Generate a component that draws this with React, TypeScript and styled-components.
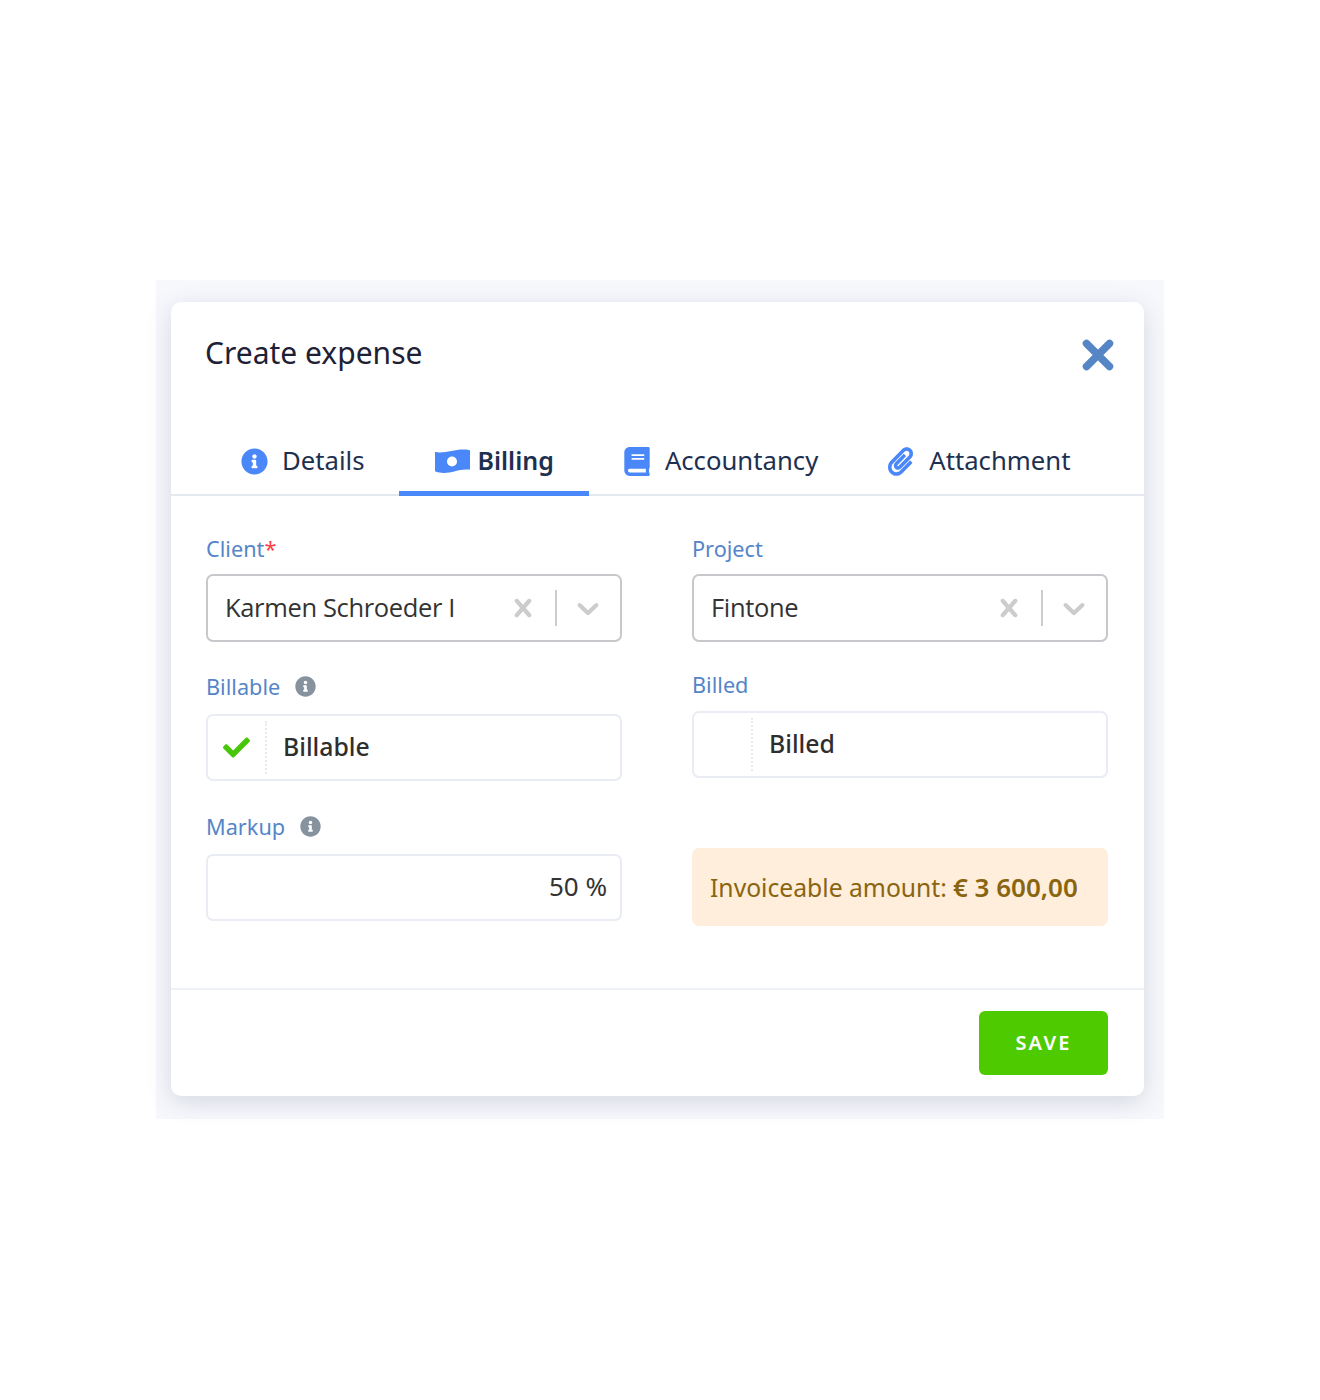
import React from "react";
import styled, { createGlobalStyle } from "styled-components";
import { FaInfoCircle, FaBook, FaPaperclip, FaCheck } from "react-icons/fa";

const GlobalStyle = createGlobalStyle`
  html, body {
    margin: 0;
    background: #fff;
    font-family: "Noto Sans", "Open Sans", sans-serif;
  }
`;

const Page = styled.div`
  height: 1400px;
  padding-top: 280px;
  box-sizing: border-box;
`;

const Backdrop = styled.div`
  width: 1008px;
  height: 839px;
  margin: 0 auto;
  padding: 22px 20px 23px 15px;
  box-sizing: border-box;
  background: #f7f8fc;
`;

const Modal = styled.div`
  height: 100%;
  display: flex;
  flex-direction: column;
  background: #fff;
  border-radius: 10px;
  box-shadow: 0 6px 24px rgba(80, 90, 120, 0.2);
`;

const Header = styled.header`
  display: flex;
  justify-content: space-between;
  align-items: flex-start;
  height: 111px;
  padding: 30px 30px 0 34px;
  box-sizing: border-box;
`;

const Title = styled.h1`
  margin: 0;
  font-size: 30px;
  line-height: 41px;
  font-weight: 400;
  color: #1e2136;
`;

const CloseButton = styled.button`
  display: flex;
  width: 32px;
  height: 32px;
  margin-top: 7px;
  padding: 0;
  border: 0;
  background: none;
  color: #5585c5;
`;

const Tabs = styled.nav`
  display: flex;
  height: 83px;
  padding-left: 35px;
  box-sizing: border-box;
  border-bottom: 2px solid #e4e8ef;
`;

const Tab = styled.div<{ $active?: boolean; $gap: number }>`
  display: flex;
  align-items: center;
  gap: ${(p) => p.$gap}px;
  height: 83px;
  padding: 16px 35px 0;
  box-sizing: border-box;
  font-size: ${(p) => (p.$active ? 25 : 25.7)}px;
  font-weight: ${(p) => (p.$active ? 600 : 400)};
  color: #1e3050;
  border-bottom: 5px solid ${(p) => (p.$active ? "#4a87f8" : "transparent")};
  svg {
    margin-top: 2px;
    color: #4a87f8;
    flex: none;
  }
`;

const BookIcon = styled(FaBook)`
  width: 26px;
  height: 29px;
`;

const ClipIcon = styled(FaPaperclip)`
  width: 25px;
  height: 29px;
`;

const Form = styled.div`
  flex: 1;
  display: grid;
  grid-template-columns: 416px 416px;
  column-gap: 70px;
  padding: 35px 0 0 35px;
`;

const Column = styled.div`
  display: flex;
  flex-direction: column;
`;

const Label = styled.label<{ $top?: number; $bottom?: number }>`
  display: flex;
  align-items: center;
  gap: 15px;
  height: 36px;
  padding-bottom: 2px;
  box-sizing: border-box;
  margin-top: ${(p) => p.$top ?? 0}px;
  margin-bottom: ${(p) => p.$bottom ?? 8}px;
  font-size: 21.7px;
  color: #5585c8;
  svg {
    color: #87929f;
  }
`;

const Required = styled.span`
  color: #fb3f4a;
`;

const Select = styled.div`
  display: flex;
  align-items: center;
  height: 68px;
  padding: 0 14px 0 17px;
  box-sizing: border-box;
  border: 2px solid #c6c8cb;
  border-radius: 7px;
  font-family: "Open Sans", "Noto Sans", sans-serif;
  font-size: 25.5px;
  letter-spacing: -0.35px;
  color: #333;
`;

const SelectValue = styled.span`
  flex: 1;
  padding-bottom: 2px;
`;

const Indicator = styled.svg`
  width: 36px;
  height: 36px;
  fill: #cccccc;
`;

const Separator = styled.span`
  width: 2px;
  height: 36px;
  margin: 0 13px 0 14px;
  background: #cccccc;
`;

const Toggle = styled.div`
  display: flex;
  align-items: stretch;
  height: 67px;
  box-sizing: border-box;
  border: 2px solid #eaecf4;
  border-radius: 7px;
  font-size: 24.8px;
  font-weight: 500;
  color: #2e2e2e;
`;

const ToggleBox = styled.span`
  display: flex;
  align-items: center;
  justify-content: center;
  width: 57px;
  margin: 5px 0;
  border-right: 2px dotted #e8eaf2;
  color: #48c70a;
`;

const ToggleText = styled.span`
  align-self: center;
  padding: 0 0 3px 16px;
`;

const NumberField = styled.div`
  display: flex;
  align-items: center;
  justify-content: flex-end;
  height: 67px;
  padding: 0 13px 4px 0;
  box-sizing: border-box;
  border: 2px solid #eaecf4;
  border-radius: 7px;
  font-size: 26px;
  color: #333;
`;

const Amount = styled.div`
  display: flex;
  align-items: center;
  gap: 6px;
  height: 78px;
  margin-top: 70px;
  padding-left: 18px;
  box-sizing: border-box;
  border-radius: 7px;
  background: #ffeedb;
  font-size: 24.7px;
  color: #8a6510;
`;

const AmountValue = styled.strong`
  font-size: 26px;
  font-weight: 600;
`;

const Footer = styled.footer`
  display: flex;
  justify-content: flex-end;
  height: 108px;
  padding: 21px 36px 0 0;
  box-sizing: border-box;
  border-top: 2px solid #edf0f5;
`;

const SaveButton = styled.button`
  width: 129px;
  height: 64px;
  padding: 0 0 2px;
  border: 0;
  border-radius: 6px;
  background: #4ecb00;
  color: #fff;
  font-family: inherit;
  font-size: 20px;
  font-weight: 600;
  letter-spacing: 2.2px;
`;

const CLEAR_PATH =
  "M14.348 14.849c-0.469 0.469-1.229 0.469-1.697 0l-2.651-3.030-2.651 3.029c-0.469 0.469-1.229 0.469-1.697 0-0.469-0.469-0.469-1.229 0-1.697l2.758-3.15-2.759-3.152c-0.469-0.469-0.469-1.228 0-1.697s1.228-0.469 1.697 0l2.652 3.031 2.651-3.031c0.469-0.469 1.228-0.469 1.697 0s0.469 1.229 0 1.697l-2.758 3.152 2.758 3.15c0.469 0.469 0.469 1.229 0 1.698z";
const CHEVRON_PATH =
  "M4.516 7.548c0.436-0.446 1.043-0.481 1.576 0l3.908 3.747 3.908-3.747c0.533-0.481 1.141-0.446 1.574 0 0.436 0.445 0.408 1.197 0 1.615-0.406 0.418-4.695 4.502-4.695 4.502-0.217 0.223-0.502 0.335-0.787 0.335s-0.57-0.112-0.789-0.335c0 0-4.287-4.084-4.695-4.502s-0.436-1.17 0-1.615z";

const BillIcon = () => (
  <svg width="36" height="25" viewBox="0 0 36 25">
    <path
      fill="currentColor"
      fillRule="evenodd"
      d="M1 3.500c0-.3.3-.5.6-.4C12 5 22-1 35 1c.6.1 1 .5 1 1v18c0 .5-.4.7-.9.6C24 19 14 27 1.500 22.500 1.200 22.400 1 22 1 21.700zM18 7.500a5 5 0 1 1 0 10 5 5 0 0 1 0-10z"
    />
  </svg>
);

const CloseIcon = () => (
  <svg width="32" height="32" viewBox="0 0 32 32">
    <path d="M4.500 4.500l23 23M27.500 4.500l-23 23" stroke="currentColor" strokeWidth="7.500" strokeLinecap="round" />
  </svg>
);

const ClientSelect = ({ value }: { value: string }) => (
  <Select>
    <SelectValue>{value}</SelectValue>
    <Indicator viewBox="0 0 20 20">
      <path d={CLEAR_PATH} />
    </Indicator>
    <Separator />
    <Indicator viewBox="0 0 20 20">
      <path d={CHEVRON_PATH} />
    </Indicator>
  </Select>
);

export default function App() {
  return (
    <Page>
      <GlobalStyle />
      <Backdrop>
        <Modal>
          <Header>
            <Title>Create expense</Title>
            <CloseButton>
              <CloseIcon />
            </CloseButton>
          </Header>
          <Tabs>
            <Tab $gap={14}>
              <FaInfoCircle size={27} />
              Details
            </Tab>
            <Tab $active $gap={7}>
              <BillIcon />
              Billing
            </Tab>
            <Tab $gap={15}>
              <BookIcon />
              Accountancy
            </Tab>
            <Tab $gap={16}>
              <ClipIcon />
              Attachment
            </Tab>
          </Tabs>
          <Form>
            <Column>
              <Label $bottom={7}>
                <span>
                  Client<Required>*</Required>
                </span>
              </Label>
              <ClientSelect value="Karmen Schroeder I" />
              <Label $top={27} $bottom={9}>
                Billable
                <FaInfoCircle size={21} />
              </Label>
              <Toggle>
                <ToggleBox>
                  <FaCheck size={27} />
                </ToggleBox>
                <ToggleText>Billable</ToggleText>
              </Toggle>
              <Label $top={28} $bottom={9}>
                Markup
                <FaInfoCircle size={21} />
              </Label>
              <NumberField>50 %</NumberField>
            </Column>
            <Column>
              <Label $bottom={7}>Project</Label>
              <ClientSelect value="Fintone" />
              <Label $top={25}>Billed</Label>
              <Toggle>
                <ToggleBox />
                <ToggleText>Billed</ToggleText>
              </Toggle>
              <Amount>
                Invoiceable amount:
                <AmountValue>€ 3 600,00</AmountValue>
              </Amount>
            </Column>
          </Form>
          <Footer>
            <SaveButton>SAVE</SaveButton>
          </Footer>
        </Modal>
      </Backdrop>
    </Page>
  );
}
